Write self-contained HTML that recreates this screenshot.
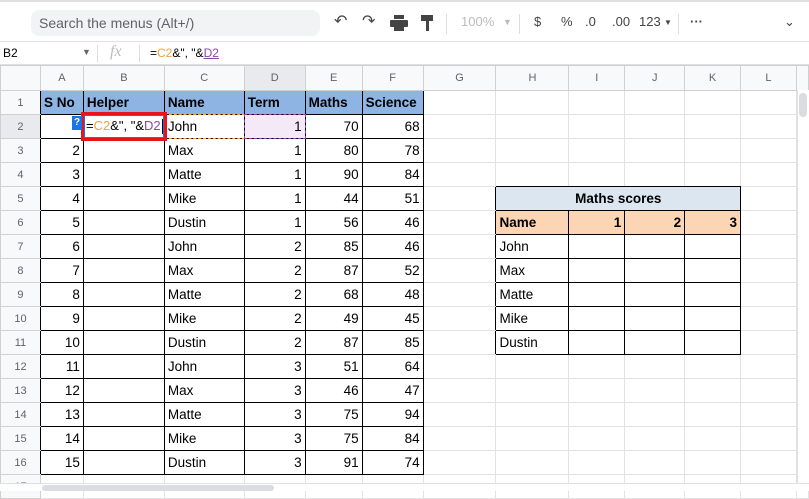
<!DOCTYPE html>
<html><head><meta charset="utf-8"><style>
*{box-sizing:border-box;margin:0;padding:0}
body{width:809px;height:491px;overflow:hidden;background:#fff;font-family:"Liberation Sans",sans-serif;position:relative}
.tb{position:absolute;left:0;top:0;width:809px;height:42px;border-top:2px solid #e0e0e0;border-bottom:1px solid #e0e0e0}
.search{position:absolute;left:31px;top:8px;width:289px;height:26px;background:#f1f3f4;border-radius:8px;color:#5f6368;font-size:14px;line-height:26px;padding-left:8px}
.ic{position:absolute;top:12px;color:#444;font-size:13px}
.sep{position:absolute;top:12px;width:1px;height:20px;background:#ddd}
.fb{position:absolute;left:0;top:42px;width:809px;height:23px;border-bottom:1px solid #e0e0e0;font-size:12px}
table{position:absolute;left:0;top:65px;border-collapse:collapse;table-layout:fixed}
td{height:24px;border:1px solid #e2e2e2;font-size:13.5px;padding:0 3px;white-space:nowrap;overflow:hidden;color:#000}
tr.h td{height:25px;background:#f8f9fa;color:#5f6368;font-size:11px;text-align:center;border-color:#d0d0d0}
td.rh{background:#f8f9fa;color:#5f6368;font-size:11px;text-align:center;border-color:#d0d0d0;border-right-color:#000}
.d{border:1px solid #000;text-align:right}
.l{text-align:left}
.bh{background:#8db4e2;font-weight:bold;text-align:left}
.ms{background:#dce6f1;font-weight:bold;text-align:center;border:1px solid #000}
.nr{background:#fcd5b4;font-weight:bold;border:1px solid #000;text-align:right}
.bl{border-right-color:#000}
.bb{border-bottom-color:#000}
</style></head><body>
<div class="tb">
<div class="search">Search the menus (Alt+/)</div>
<div class="ic" style="left:334px;font-size:16px;top:9px">&#x21B6;</div>
<div class="ic" style="left:362px;font-size:16px;top:9px">&#x21B7;</div>
<svg style="position:absolute;left:390px;top:13px" width="18" height="16"><rect x="4" y="0" width="10" height="4" fill="#444"/><rect x="0" y="5" width="18" height="7" rx="1" fill="#444"/><rect x="4" y="10" width="10" height="6" fill="#444"/></svg>
<svg style="position:absolute;left:421px;top:13px" width="14" height="17"><rect x="0" y="0" width="12" height="6" fill="#444"/><rect x="5" y="6" width="3" height="10" fill="#444"/></svg>
<div class="sep" style="left:446px"></div>
<div class="ic" style="left:461px;color:#bbb">100%</div>
<div class="ic" style="left:503px;color:#bbb;font-size:9px;top:15px">&#9660;</div>
<div class="sep" style="left:519px"></div>
<div class="ic" style="left:534px">$</div>
<div class="ic" style="left:561px">%</div>
<div class="ic" style="left:585px">.0</div>
<div class="ic" style="left:612px">.00</div>
<div class="ic" style="left:639px">123</div>
<div class="ic" style="left:664px;font-size:8px;top:16px">&#9660;</div>
<div class="sep" style="left:678px"></div>
<div class="ic" style="left:690px;font-weight:bold">&middot;&middot;&middot;</div>
<div class="ic" style="left:784px">&#8964;</div>
</div>
<div class="fb">
<div style="position:absolute;left:3px;top:4px">B2</div>
<div style="position:absolute;left:82px;top:5px;color:#666;font-size:9px">&#9660;</div>
<div style="position:absolute;left:97px;top:3px;width:1px;height:17px;background:#ddd"></div>
<div style="position:absolute;left:110px;top:1px;color:#bbb;font-style:italic;font-family:'Liberation Serif',serif;font-size:16px">fx</div>
<div style="position:absolute;left:139px;top:3px;width:1px;height:17px;background:#ddd"></div>
<div style="position:absolute;left:150px;top:4px">=<span style="color:#f4a13b">C2</span>&amp;", "&amp;<span style="color:#8e44ad;text-decoration:underline">D2</span></div>
</div>
<table>
<colgroup><col style="width:40px"><col style="width:43px"><col style="width:81px"><col style="width:80px"><col style="width:61px"><col style="width:57px"><col style="width:61px"><col style="width:73px"><col style="width:73px"><col style="width:56px"><col style="width:60px"><col style="width:56px"><col style="width:56px"><col style="width:12px"></colgroup>
<tr class="h"><td></td><td>A</td><td>B</td><td>C</td><td style="background:#e8eaed">D</td><td>E</td><td>F</td><td>G</td><td>H</td><td>I</td><td>J</td><td>K</td><td>L</td><td></td></tr>
<tr><td class="rh">1</td><td class="d bh">S No</td><td class="d bh">Helper</td><td class="d bh">Name</td><td class="d bh">Term</td><td class="d bh">Maths</td><td class="d bh">Science</td><td></td><td></td><td></td><td></td><td></td><td></td><td></td></tr>
<tr><td class="rh" style="background:#e8eaed">2</td><td class="d"></td><td class="d l"></td><td class="d l">John</td><td class="d" style="background:#f3e9f7">1</td><td class="d">70</td><td class="d">68</td><td></td><td></td><td></td><td></td><td></td><td></td><td></td></tr>
<tr><td class="rh">3</td><td class="d">2</td><td class="d"></td><td class="d l">Max</td><td class="d">1</td><td class="d">80</td><td class="d">78</td><td></td><td></td><td></td><td></td><td></td><td></td><td></td></tr>
<tr><td class="rh">4</td><td class="d">3</td><td class="d"></td><td class="d l">Matte</td><td class="d">1</td><td class="d">90</td><td class="d">84</td><td></td><td class="bb"></td><td class="bb"></td><td class="bb"></td><td class="bb"></td><td></td><td></td></tr>
<tr><td class="rh">5</td><td class="d">4</td><td class="d"></td><td class="d l">Mike</td><td class="d">1</td><td class="d">44</td><td class="d">51</td><td class="bl"></td><td colspan="4" class="ms">Maths scores</td><td></td><td></td></tr>
<tr><td class="rh">6</td><td class="d">5</td><td class="d"></td><td class="d l">Dustin</td><td class="d">1</td><td class="d">56</td><td class="d">46</td><td class="bl"></td><td class="nr" style="text-align:left">Name</td><td class="nr">1</td><td class="nr">2</td><td class="nr">3</td><td></td><td></td></tr>
<tr><td class="rh">7</td><td class="d">6</td><td class="d"></td><td class="d l">John</td><td class="d">2</td><td class="d">85</td><td class="d">46</td><td class="bl"></td><td class="d l">John</td><td class="d"></td><td class="d"></td><td class="d"></td><td></td><td></td></tr>
<tr><td class="rh">8</td><td class="d">7</td><td class="d"></td><td class="d l">Max</td><td class="d">2</td><td class="d">87</td><td class="d">52</td><td class="bl"></td><td class="d l">Max</td><td class="d"></td><td class="d"></td><td class="d"></td><td></td><td></td></tr>
<tr><td class="rh">9</td><td class="d">8</td><td class="d"></td><td class="d l">Matte</td><td class="d">2</td><td class="d">68</td><td class="d">48</td><td class="bl"></td><td class="d l">Matte</td><td class="d"></td><td class="d"></td><td class="d"></td><td></td><td></td></tr>
<tr><td class="rh">10</td><td class="d">9</td><td class="d"></td><td class="d l">Mike</td><td class="d">2</td><td class="d">49</td><td class="d">45</td><td class="bl"></td><td class="d l">Mike</td><td class="d"></td><td class="d"></td><td class="d"></td><td></td><td></td></tr>
<tr><td class="rh">11</td><td class="d">10</td><td class="d"></td><td class="d l">Dustin</td><td class="d">2</td><td class="d">87</td><td class="d">85</td><td class="bl"></td><td class="d l">Dustin</td><td class="d"></td><td class="d"></td><td class="d"></td><td></td><td></td></tr>
<tr><td class="rh">12</td><td class="d">11</td><td class="d"></td><td class="d l">John</td><td class="d">3</td><td class="d">51</td><td class="d">64</td><td></td><td></td><td></td><td></td><td></td><td></td><td></td></tr>
<tr><td class="rh">13</td><td class="d">12</td><td class="d"></td><td class="d l">Max</td><td class="d">3</td><td class="d">46</td><td class="d">47</td><td></td><td></td><td></td><td></td><td></td><td></td><td></td></tr>
<tr><td class="rh">14</td><td class="d">13</td><td class="d"></td><td class="d l">Matte</td><td class="d">3</td><td class="d">75</td><td class="d">94</td><td></td><td></td><td></td><td></td><td></td><td></td><td></td></tr>
<tr><td class="rh">15</td><td class="d">14</td><td class="d"></td><td class="d l">Mike</td><td class="d">3</td><td class="d">75</td><td class="d">84</td><td></td><td></td><td></td><td></td><td></td><td></td><td></td></tr>
<tr><td class="rh">16</td><td class="d">15</td><td class="d"></td><td class="d l">Dustin</td><td class="d">3</td><td class="d">91</td><td class="d">74</td><td></td><td></td><td></td><td></td><td></td><td></td><td></td></tr>
<tr><td class="rh" style="border-right-color:#d0d0d0">17</td><td></td><td></td><td></td><td></td><td></td><td></td><td></td><td></td><td></td><td></td><td></td><td></td><td></td></tr>
</table>
<!-- overlays -->
<div style="position:absolute;left:164px;top:114px;width:81px;height:25px;border:1.5px dashed #f4a13b"></div>
<div style="position:absolute;left:244px;top:114px;width:62px;height:25px;border:1.5px dashed #8e44ad"></div>
<div style="position:absolute;left:81px;top:112px;width:86px;height:29px;border:3px solid #e8131b;background:#fff"></div>
<div style="position:absolute;left:84px;top:115px;width:80px;height:23px;border:1.5px solid #1a73e8;font-size:13px;line-height:20px;padding-left:1px;white-space:nowrap">=<span style="color:#f4a13b">C2</span>&amp;", "&amp;<span style="color:#8e44ad">D2</span><span style="display:inline-block;width:1px;height:15px;background:#000;vertical-align:middle;margin-left:1px"></span></div>
<div style="position:absolute;left:72px;top:116px;width:10px;height:14px;background:#1a73e8;color:#fff;font-size:10px;font-weight:bold;text-align:center;line-height:14px">?</div>
<!-- scrollbars -->
<div style="position:absolute;left:797px;top:90px;width:12px;height:393px;background:#fff;border-left:1px solid #e0e0e0"></div>
<div style="position:absolute;left:799px;top:93px;width:8px;height:24px;background:#dadce0;border-radius:4px"></div>
<div style="position:absolute;left:0;top:483px;width:809px;height:8px;background:#fff;border-top:1px solid #e0e0e0"></div>
<div style="position:absolute;left:42px;top:485px;width:232px;height:6px;background:#dadce0;border-radius:3px"></div>
</body></html>
